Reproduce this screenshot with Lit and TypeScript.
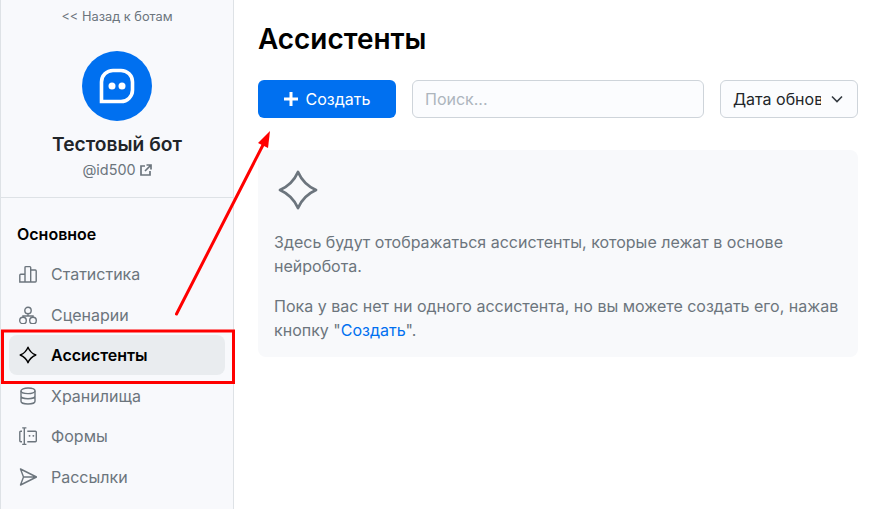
import { LitElement, html, css, svg } from "lit";
import { customElement } from "lit/decorators.js";

const icons: Record<string, unknown> = {
  stats: svg`<path d="M.8 17V10.200c0-.5.4-.9.9-.9H6V17zM6 17V2.500c0-.5.4-.9.9-.9h3.900c.5 0 .9.4.9.9V17zM11.700 5H16.300c.5 0 .9.4.9.9V16.100c0 .5-.4.9-.9.9H.8"/>`,
  flow: svg`<circle cx="9" cy="4.400" r="3.200"/><circle cx="4" cy="14.500" r="3.300"/><circle cx="14" cy="14.500" r="3.300"/><path d="M9 7.600V10M4 11.200V10H14V11.200"/>`,
  star: svg`<path d="M9 1.200Q11.200 6.800 16.800 9 11.200 11.200 9 16.800 6.800 11.200 1.200 9 6.800 6.800 9 1.200z" stroke-linejoin="round"/>`,
  db: svg`<ellipse cx="9" cy="3.800" rx="7" ry="2.800"/><path d="M2 3.800v10.400c0 1.500 3.100 2.800 7 2.800s7-1.300 7-2.800V3.800M2 9c0 1.500 3.100 2.800 7 2.800s7-1.300 7-2.800"/>`,
  form: svg`<path d="M3 4.200H1.700c-.5 0-.9.4-.9.900v8.700c0 .5.4.9.9.9H3M8.300 4.200h8.100c.5 0 .9.4.9.900v8.700c0 .5-.4.9-.9.900H8.300M3.200 .9h4.200M3.200 17.500h4.200M5.300 .9v16.600"/><path d="M10.500 8.800h.1M14.300 8.800h.1" stroke-width="1.800" stroke-linecap="round"/>`,
  send: svg`<path d="M1.500 1 17.500 9 1.500 17 4.500 9zM4.500 9h13" stroke-linejoin="round"/>`,
};

const nav = [
  ["stats", "Статистика"],
  ["flow", "Сценарии"],
  ["star", "Ассистенты"],
  ["db", "Хранилища"],
  ["form", "Формы"],
  ["send", "Рассылки"],
];

@customElement("app-root")
export class AppRoot extends LitElement {
  static styles = css`
    :host {
      display: flex;
      position: relative;
      width: 881px;
      height: 509px;
      overflow: hidden;
      background: #fff;
      font-family: Inter, "Liberation Sans", sans-serif;
      color: #212529;
    }
    .side {
      box-sizing: border-box;
      width: 234px;
      flex: none;
      background: #f8f9fc;
      border-left: 1px solid #dee2e6;
      border-right: 1px solid #dee2e6;
      display: flex;
      flex-direction: column;
    }
    .head {
      height: 197px;
      border-bottom: 1px solid #dee2e6;
      display: flex;
      flex-direction: column;
      align-items: center;
    }
    .back {
      font-size: 12.8px;
      line-height: 16px;
      margin-top: 9px;
      color: #6c757d;
    }
    .avatar {
      width: 70px;
      height: 70px;
      border-radius: 50%;
      background: #0070f0;
      margin-top: 26px;
      display: flex;
      align-items: center;
      justify-content: center;
    }
    .name {
      margin-top: 11px;
      font-size: 19.2px;
      line-height: 24px;
      font-weight: 600;
      color: #212529;
    }
    .handle {
      margin-top: 4px;
      font-size: 14.4px;
      line-height: 20px;
      color: #6c757d;
      display: flex;
      align-items: center;
      gap: 4px;
    }
    .section {
      margin: 26px 0 0 16px;
      font-size: 16px;
      line-height: 20px;
      font-weight: 600;
      color: #000;
    }
    .nav {
      margin: 10px 8px 0 8px;
      display: flex;
      flex-direction: column;
      gap: 0.600px;
    }
    .item {
      height: 40px;
      border-radius: 8px;
      padding-left: 10px;
      display: flex;
      align-items: center;
      gap: 14px;
      font-size: 16px;
      color: #6c757d;
    }
    .item.active {
      background: #e9ecef;
      color: #000;
      font-weight: 600;
    }
    .item svg {
      flex: none;
      width: 18px;
      height: 18px;
      fill: none;
      stroke: currentColor;
      stroke-width: 1.400;
    }
    .main {
      flex: 1;
      min-width: 0;
      padding: 0 23px 0 24px;
    }
    h1 {
      margin: 22px 0 0;
      font-size: 27.900px;
      line-height: 34px;
      font-weight: 600;
      color: #000;
    }
    .bar {
      margin-top: 24px;
      display: flex;
      gap: 16px;
    }
    .btn {
      width: 138px;
      height: 38px;
      flex: none;
      box-sizing: border-box;
      background: #0070f0;
      color: #fff;
      border-radius: 6px;
      display: flex;
      align-items: center;
      justify-content: center;
      gap: 8px;
      font-size: 16px;
    }
    .search {
      flex: 1;
      box-sizing: border-box;
      height: 38px;
      background: #fbfcfe;
      border: 1px solid #ced4da;
      border-radius: 6px;
      padding-left: 12px;
      display: flex;
      align-items: center;
      font-size: 16px;
      color: #adb5bd;
    }
    .sort {
      width: 138px;
      flex: none;
      box-sizing: border-box;
      height: 38px;
      background: #fbfcfe;
      border: 1px solid #ced4da;
      border-radius: 6px;
      padding-left: 12px;
      display: flex;
      align-items: center;
      font-size: 16px;
      color: #212529;
    }
    .sort span {
      width: 88px;
      overflow: hidden;
      white-space: nowrap;
    }
    .sort svg {
      margin-left: 10px;
    }
    .card {
      margin-top: 32px;
      background: #f8f9fb;
      border-radius: 8px;
      padding: 19px 16px 7px;
      color: #6c757d;
      font-size: 16px;
      line-height: 24px;
      height: 207px;
      box-sizing: border-box;
    }
    .card svg {
      display: block;
      width: 42px;
      height: 42px;
      margin-left: 3px;
      fill: none;
      stroke: #6c757d;
      stroke-width: 2.800;
      stroke-linejoin: round;
    }
    .card p {
      margin: 0;
    }
    .card p.first {
      margin-top: 19px;
    }
    .card p.second {
      margin-top: 16px;
    }
    .link {
      color: #0070f0;
    }
    .note {
      position: absolute;
      inset: 0;
      width: 881px;
      height: 509px;
      pointer-events: none;
    }
  `;

  render() {
    return html`
      <aside class="side">
        <div class="head">
          <div class="back">&lt;&lt; Назад к ботам</div>
          <div class="avatar">
            <svg width="36" height="36" viewBox="0 0 36 36" fill="none">
              <path d="M2.500 33.500V14C2.500 7.600 7.600 2.500 14 2.500h8C28.400 2.500 33.500 7.600 33.500 14v8c0 6.400-5.100 11.500-11.500 11.500z" stroke="#fff" stroke-width="3.600" stroke-linejoin="miter"/>
              <circle cx="13" cy="18" r="3.500" fill="#fff"/>
              <circle cx="23" cy="18" r="3.500" fill="#fff"/>
            </svg>
          </div>
          <div class="name">Тестовый бот</div>
          <div class="handle">
            @id500
            <svg width="12" height="12" viewBox="0 0 12 12" fill="none" stroke="#6c757d" stroke-width="1.700">
              <path d="M5 2H1v9h9V7M6.500 1H11v4.500M11 1 5 7"/>
            </svg>
          </div>
        </div>
        <div class="section">Основное</div>
        <div class="nav">
          ${nav.map(
            ([k, t]) => html`
              <div class="item ${k === "star" ? "active" : ""}">
                <svg viewBox="0 0 18 18">${icons[k]}</svg>
                <span>${t}</span>
              </div>
            `
          )}
        </div>
      </aside>
      <main class="main">
        <h1>Ассистенты</h1>
        <div class="bar">
          <div class="btn">
            <svg width="14" height="14" viewBox="0 0 14 14" stroke="#fff" stroke-width="3">
              <path d="M7 0v14M0 7h14"/>
            </svg>
            Создать
          </div>
          <div class="search">Поиск...</div>
          <div class="sort">
            <span>Дата обновления</span>
            <svg width="12" height="8" viewBox="0 0 12 8" fill="none" stroke="#343a40" stroke-width="1.600">
              <path d="M1 1.500 6 6.500 11 1.500"/>
            </svg>
          </div>
        </div>
        <div class="card">
          <svg viewBox="0 0 42 42">
            <path d="M21 3Q26.500 15.500 39 21 26.500 26.500 21 39 15.500 26.500 3 21 15.500 15.500 21 3z"/>
          </svg>
          <p class="first">Здесь будут отображаться ассистенты, которые лежат в основе нейробота.</p>
          <p class="second">
            Пока у вас нет ни одного ассистента, но вы можете создать его, нажав кнопку "<span class="link">Создать</span>".
          </p>
        </div>
      </main>
      <svg class="note" viewBox="0 0 881 509">
        <rect x="2.500" y="331" width="231" height="51.500" fill="none" stroke="#f00" stroke-width="3"/>
        <path d="M176.500 314 264 143" stroke="#f00" stroke-width="3" fill="none" stroke-linecap="round"/>
        <path d="M270 131 268 148 258 143z" fill="#f00"/>
      </svg>
    `;
  }
}
